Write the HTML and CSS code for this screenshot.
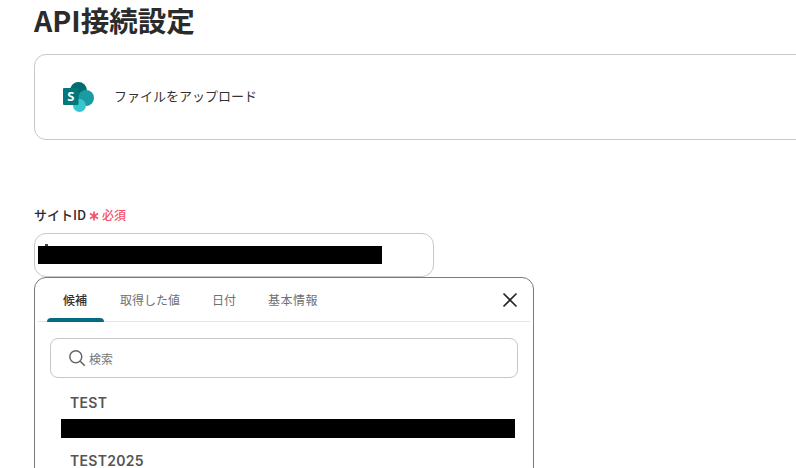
FILE: index.html
```html
<!DOCTYPE html>
<html lang="ja">
<head>
<meta charset="utf-8">
<title>API接続設定</title>
<link rel="stylesheet" href="styles.css">
</head>
<body>
<main class="page">
  <h1 class="title">API接続設定</h1>
  <section class="card">
    <svg class="logo" width="32" height="32" viewBox="0 0 32 32" aria-hidden="true">
      <circle cx="15.5" cy="9.5" r="8.5" fill="#036c70"/>
      <circle cx="23" cy="17" r="8" fill="#1a9ba1"/>
      <circle cx="16.5" cy="24.5" r="6.5" fill="#37c6d0"/>
      <rect x="0" y="7" width="15.5" height="17" rx="1" fill="#03787c"/>
      <text x="7.8" y="20" class="logo-s">S</text>
    </svg>
    <span class="card-text">ファイルをアップロード</span>
  </section>
  <div class="label">
    <span class="label-name">サイトID</span>
    <svg class="star" width="10" height="10" viewBox="0 0 10 10" aria-hidden="true">
      <path d="M5 .5v9M1 2.6l8 4.8M9 2.6l-8 4.8" stroke="#f4516c" stroke-width="1.7" fill="none"/>
    </svg>
    <span class="req">必須</span>
  </div>
  <div class="input"><div class="redact redact-input"></div></div>
  <section class="popup">
    <div class="tabs">
      <span class="tab tab-active">候補</span>
      <span class="tab tab-2">取得した値</span>
      <span class="tab tab-3">日付</span>
      <span class="tab tab-4">基本情報</span>
      <svg class="close" width="16" height="16" viewBox="0 0 16 16" aria-hidden="true">
        <path d="M1.5 1.5l13 13M14.5 1.5l-13 13" stroke="#222" stroke-width="1.6" fill="none"/>
      </svg>
    </div>
    <div class="search">
      <svg width="18" height="18" viewBox="0 0 18 18" aria-hidden="true">
        <circle cx="7.8" cy="7.8" r="6" fill="none" stroke="#666" stroke-width="1.5"/>
        <path d="M12.2 12.2l4.6 4.6" stroke="#666" stroke-width="1.6"/>
      </svg>
      <span class="search-text">検索</span>
    </div>
    <div class="list">
      <div class="item-name">TEST</div>
      <div class="redact redact-item"></div>
      <div class="item-name item-second">TEST2025</div>
    </div>
  </section>
</main>
</body>
</html>
```
FILE: styles.css
```css
html, body {
  margin: 0;
  height: 468px;
  overflow: hidden;
  background: #fff;
}
body {
  font-family: "Noto Sans CJK JP", "Noto Sans", sans-serif;
  color: #2b2b2b;
}
.page {
  padding-left: 34px;
  width: 900px;
}
.title {
  margin: 0;
  height: 54px;
  font-size: 28.5px;
  line-height: 40px;
  font-weight: 700;
  color: #2b2b2b;
}
.card {
  box-sizing: border-box;
  width: 860px;
  height: 86px;
  border: 1px solid #c8c8c8;
  border-radius: 12px;
  display: flex;
  align-items: center;
  padding-left: 28px;
  gap: 19px;
}
.logo { flex: none; }
.logo-s {
  font-family: "Open Sans", sans-serif;
  font-size: 13px;
  font-weight: 700;
  fill: #fff;
  text-anchor: middle;
}
.card-text {
  font-size: 13px;
  line-height: 18px;
  margin-top: -2px;
  color: #333;
}
.label {
  margin-top: 65px;
  height: 20px;
  display: flex;
  align-items: center;
  font-size: 13px;
  line-height: 20px;
}
.label-name {
  font-weight: 500;
  color: #2b2b2b;
}
.star {
  flex: none;
  margin: 1px 3px 0 3px;
}
.req {
  font-size: 12px;
  font-weight: 500;
  color: #f4516c;
}
.input {
  box-sizing: border-box;
  width: 400px;
  height: 44px;
  margin-top: 8px;
  border: 1px solid #c8c8c8;
  border-radius: 12px;
  padding: 12px 0 0 3px;
}
.redact { background: #000; }
.redact-input {
  width: 344px;
  height: 18px;
  position: relative;
}
.redact-input::before {
  content: "";
  position: absolute;
  left: 7px;
  top: -2px;
  width: 3px;
  height: 2px;
  background: #444;
}
.popup {
  box-sizing: border-box;
  width: 500px;
  height: 260px;
  border: 1px solid #7a7a7a;
  border-radius: 12px;
  padding: 0 3px;
}
.tabs {
  height: 43px;
  border-bottom: 1px solid #e4e4e4;
  display: flex;
  align-items: center;
  position: relative;
  font-size: 12px;
}
.tab {
  color: #707070;
  font-weight: 400;
}
.tab-active {
  margin-left: 25px;
  color: #333;
  font-weight: 500;
}
.tab-active::after {
  content: "";
  position: absolute;
  left: 9px;
  bottom: -1px;
  width: 57px;
  height: 4px;
  border-radius: 4px 4px 0 0;
  background: #066a80;
}
.tab-2 { margin-left: 33px; }
.tab-3 { margin-left: 32px; }
.tab-4 {
  margin-left: 32px;
  letter-spacing: 0.5px;
}
.close {
  margin-left: auto;
  margin-right: 12px;
}
.search {
  box-sizing: border-box;
  width: 468px;
  height: 40px;
  margin: 16px 0 0 12px;
  border: 1px solid #c8c8c8;
  border-radius: 8px;
  display: flex;
  align-items: center;
  gap: 3px;
  padding-left: 17px;
}
.search-text {
  font-size: 12px;
  color: #777;
}
.list {
  margin: 15px 0 0 23px;
}
.item-name {
  padding-left: 9px;
  font-family: "Inter", "Noto Sans", sans-serif;
  font-size: 14px;
  line-height: 20px;
  font-weight: 600;
  color: #555;
  letter-spacing: 0.3px;
}
.redact-item {
  width: 454px;
  height: 19px;
  margin-top: 6px;
}
.item-second { margin-top: 13px; }
```
